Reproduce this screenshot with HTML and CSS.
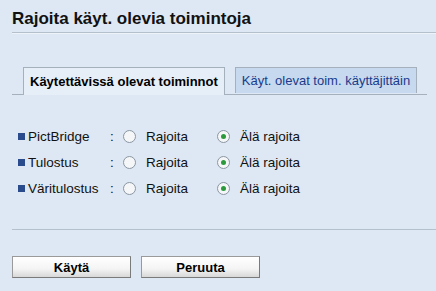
FILE: index.html
```html
<!DOCTYPE html>
<html lang="fi">
<head>
    <meta charset="UTF-8">
    <title>Rajoita käyt. olevia toimintoja</title>
    <link rel="stylesheet" href="styles.css">
</head>
<body>
    <div class="page">
        <h1 class="title">Rajoita käyt. olevia toimintoja</h1>

        <div class="tabs">
            <div class="tab active">Käytettävissä olevat toiminnot</div>
            <div class="tab">Käyt. olevat toim. käyttäjittäin</div>
        </div>

        <div class="rows">
            <div class="row">
                <span class="bullet"></span>
                <span class="name">PictBridge</span>
                <span class="colon">:</span>
                <label class="opt"><span class="radio"></span>Rajoita</label>
                <label class="opt"><span class="radio on"></span>Älä rajoita</label>
            </div>
            <div class="row">
                <span class="bullet"></span>
                <span class="name">Tulostus</span>
                <span class="colon">:</span>
                <label class="opt"><span class="radio"></span>Rajoita</label>
                <label class="opt"><span class="radio on"></span>Älä rajoita</label>
            </div>
            <div class="row">
                <span class="bullet"></span>
                <span class="name">Väritulostus</span>
                <span class="colon">:</span>
                <label class="opt"><span class="radio"></span>Rajoita</label>
                <label class="opt"><span class="radio on"></span>Älä rajoita</label>
            </div>
        </div>

        <div class="footer">
            <button class="btn">Käytä</button>
            <button class="btn">Peruuta</button>
        </div>
    </div>
</body>
</html>
```

FILE: styles.css
```css
/* General Page Styling */
body {
    margin: 0;
    background: #dde8f4;
    font-family: 'Liberation Sans', Arial, sans-serif;
    font-size: 13px;
    color: #111;
}

.page {
    padding: 8px 0 0 12px;
    height: 283px;
    overflow: hidden;
}

/* Title */
.title {
    margin: 0;
    font-size: 17px;
    font-weight: bold;
    height: 24px;
    line-height: 21px;
    border-bottom: 1px solid #b4c0cc;
    box-shadow: 0 1px 0 #eef3f9;
}

/* Tabs */
.tabs {
    display: flex;
    align-items: flex-end;
    gap: 10px;
    margin: 34px 9px 0 0;
    padding-left: 11px;
    border-bottom: 1px solid #a4b0bc;
}

.tab {
    height: 25px;
    line-height: 25px;
    padding: 0 6px;
    border: 1px solid #a4b0bc;
    border-bottom: none;
    background: #c6d9ee;
    color: #1a3c8c;
    margin-bottom: 1px;
}

.tab.active {
    height: 27px;
    line-height: 27px;
    background: #e6eef7;
    color: #000;
    font-weight: bold;
    margin-bottom: -1px;
    padding: 0 6px;
}

/* Rows */
.rows {
    margin-top: 28px;
    padding-left: 6px;
}

.row {
    display: flex;
    align-items: center;
    height: 26px;
    font-size: 13.5px;
}

.bullet {
    width: 7px;
    height: 7px;
    background: #2a4c8c;
    margin-right: 3px;
}

.name {
    width: 82px;
}

.colon {
    width: 13px;
}

.opt {
    display: flex;
    align-items: center;
    width: 94px;
}

.radio {
    width: 11px;
    height: 11px;
    border: 1px solid #8a96a2;
    border-radius: 50%;
    background: #f4f6f8;
    margin-right: 10px;
    display: flex;
    align-items: center;
    justify-content: center;
}

.radio.on::after {
    content: "";
    width: 5px;
    height: 5px;
    border-radius: 50%;
    background: #2c9a3c;
}

/* Footer */
.footer {
    margin-top: 28px;
    border-top: 1px solid #b4c0cc;
    padding-top: 26px;
    display: flex;
    gap: 10px;
}

.btn {
    width: 119px;
    height: 22px;
    padding: 0;
    font-family: 'Liberation Sans', Arial, sans-serif;
    font-size: 13px;
    font-weight: bold;
    color: #000;
    background: linear-gradient(#ffffff, #f4f4f4 60%, #d8d8d8);
    border: 1px solid #9a9a9a;
    border-right-color: #7a7a7a;
    border-bottom-color: #7a7a7a;
}
```
